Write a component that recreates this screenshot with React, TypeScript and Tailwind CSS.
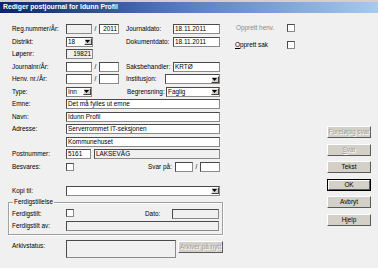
import React from "react";

const sunken =
  "border border-t-[#4a4a4a] border-l-[#4a4a4a] border-b-[#8a8a8a] border-r-[#8a8a8a]";

function Label({ className = "", children }: { className?: string; children?: React.ReactNode }) {
  return <div className={`shrink-0 whitespace-nowrap leading-[8px] ${className}`}>{children}</div>;
}

function Box({
  className = "",
  gray,
  right,
  children,
}: {
  className?: string;
  gray?: boolean;
  right?: boolean;
  children?: React.ReactNode;
}) {
  return (
    <div
      className={`h-[10px] shrink-0 flex items-center overflow-hidden whitespace-nowrap px-[1px] leading-[8px] ${sunken} ${
        gray ? "bg-[#f0f0f0]" : "bg-white"
      } ${right ? "justify-end" : ""} ${className}`}
    >
      {children}
    </div>
  );
}

function Select({ className = "", children }: { className?: string; children?: React.ReactNode }) {
  return (
    <div
      className={`h-[10px] shrink-0 flex items-center bg-white pl-[1px] pr-[0.5px] leading-[8px] ${sunken} ${className}`}
    >
      <span className="flex-1 overflow-hidden whitespace-nowrap">{children}</span>
      <span className="w-[8px] h-[7px] flex items-center justify-center bg-[#d4d0c8] border border-t-white border-l-white border-b-[#404040] border-r-[#404040]">
        <svg width="5" height="3" viewBox="0 0 5 3">
          <path d="M0 0h5L2.5 3z" fill="#000" />
        </svg>
      </span>
    </div>
  );
}

function Check({ className = "" }: { className?: string }) {
  return <div className={`w-[8px] h-[8px] shrink-0 bg-white ${sunken} ${className}`} />;
}

function Slash() {
  return <div className="w-[7px] shrink-0 text-center leading-[8px]">/</div>;
}

function Btn({
  children,
  disabled,
  primary,
  className = "",
}: {
  children?: React.ReactNode;
  disabled?: boolean;
  primary?: boolean;
  className?: string;
}) {
  const inner = (
    <div
      className={`h-full w-full flex items-center justify-center bg-[#d4d0c8] border border-t-white border-l-white border-b-[#5a5a5a] border-r-[#5a5a5a] whitespace-nowrap leading-[8px] ${
        disabled ? "text-[#a0a0a0] [text-shadow:1px_1px_0_#fff]" : "text-black"
      }`}
    >
      {children}
    </div>
  );
  return (
    <div className={`h-[12px] w-[44px] shrink-0 ${primary ? "border border-black" : ""} ${className}`}>
      {inner}
    </div>
  );
}

function Row({ children, className = "" }: { children?: React.ReactNode; className?: string }) {
  return <div className={`flex items-center h-[12.5px] ${className}`}>{children}</div>;
}

export default function App() {
  return (
    <div className="w-[378px] h-[268px] overflow-hidden bg-[#f0f0f0] text-black text-[6.4px] font-['Liberation_Sans',Arial,sans-serif]">
      <div className="h-[2px] bg-[#d4d0c8]" />
      <div className="h-[11px] flex items-center pl-[3px] bg-linear-to-r from-[#0a246a] via-[#5a7fc0] to-[#a6caf0] text-white font-bold text-[6.8px]">
        Rediger postjournal for Idunn Profil
      </div>

      <div className="flex">
        {/* venstre skjema */}
        <div className="w-[225px] shrink-0 pt-[10px]">
          <Row>
            <Label className="w-[66px] pl-[12px]">Reg.nummer/År:</Label>
            <Box gray className="w-[26px]" />
            <Slash />
            <Box right className="w-[20px]">2011</Box>
            <Label className="ml-[7px] w-[47px]">Journaldato:</Label>
            <Box className="w-[47px]">18.11.2011</Box>
          </Row>
          <Row>
            <Label className="w-[66px] pl-[12px]">Distrikt:</Label>
            <Select className="w-[27px]">18</Select>
            <Label className="ml-[33px] w-[47px]">Dokumentdato:</Label>
            <Box className="w-[47px]">18.11.2011</Box>
          </Row>
          <Row>
            <Label className="w-[66px] pl-[12px]">Løpenr:</Label>
            <Box gray right className="w-[27px]">19821</Box>
          </Row>
          <Row>
            <Label className="w-[66px] pl-[12px]">Journalnr/År:</Label>
            <Box className="w-[26px]" />
            <Slash />
            <Box className="w-[20px]" />
            <Label className="ml-[7px] w-[47px]">Saksbehandler:</Label>
            <Box className="w-[47px]">KRTØ</Box>
          </Row>
          <Row>
            <Label className="w-[66px] pl-[12px]">Henv. nr./År:</Label>
            <Box className="w-[26px]" />
            <Slash />
            <Box className="w-[20px]" />
            <Label className="ml-[7px] w-[39px]">Institusjon:</Label>
            <Select className="w-[55px]" />
          </Row>
          <Row>
            <Label className="w-[66px] pl-[12px]">Type:</Label>
            <Select className="w-[26px]">Inn</Select>
            <Label className="ml-[35px] w-[39px]">Begrensning:</Label>
            <Select className="w-[54px]">Faglig</Select>
          </Row>
          <Row>
            <Label className="w-[66px] pl-[12px]">Emne:</Label>
            <Box className="w-[154px]">Det må fylles ut emne</Box>
          </Row>
          <Row>
            <Label className="w-[66px] pl-[12px]">Navn:</Label>
            <Box className="w-[154px]">Idunn Profil</Box>
          </Row>
          <Row>
            <Label className="w-[66px] pl-[12px]">Adresse:</Label>
            <Box className="w-[154px]">Serverrommet IT-seksjonen</Box>
          </Row>
          <Row>
            <Label className="w-[66px] pl-[12px]" />
            <Box className="w-[154px]">Kommunehuset</Box>
          </Row>
          <Row>
            <Label className="w-[66px] pl-[12px]">Postnummer:</Label>
            <Box className="w-[25px]">5161</Box>
            <Box gray className="ml-[3px] w-[126px]">LAKSEVÅG</Box>
          </Row>
          <Row>
            <Label className="w-[66px] pl-[12px]">Besvares:</Label>
            <Check />
            <Label className="ml-[74px] w-[27px]">Svar på:</Label>
            <Box className="w-[18px]" />
            <Slash />
            <Box className="w-[20px]" />
          </Row>

          <Row className="mt-[11.5px]">
            <Label className="w-[66px] pl-[12px]">Kopi til:</Label>
            <Select className="w-[154px]" />
          </Row>

          <div className="relative ml-[8px] mt-[4.5px] w-[215px] h-[33px] border border-[#a0a0a0] shadow-[inset_1px_1px_0_#fff,1px_1px_0_#fff] pt-[5px]">
            <div className="absolute -top-[4.5px] left-[4px] px-[1px] bg-[#f0f0f0] leading-[8px]">Ferdigstillelse</div>
            <Row>
              <Label className="w-[57px] pl-[3px]">Ferdigstilt:</Label>
              <Check className="-mt-[2px]" />
              <Label className="ml-[71px] w-[27px]">Dato:</Label>
              <Box gray className="w-[47px]" />
            </Row>
            <Row>
              <Label className="w-[57px] pl-[3px]">Ferdigstilt av:</Label>
              <Box gray className="w-[153px]" />
            </Row>
          </div>

          <div className="flex items-start mt-[5px]">
            <Label className="w-[66px] pl-[12px] pt-[2px]">Arkivstatus:</Label>
            <Box gray className="w-[110px] !h-[18px]" />
            <Btn disabled className="ml-[2px] mt-[1px] !w-[45px]">
              Arkiver på nytt
            </Btn>
          </div>
        </div>

        {/* høyre side */}
        <div className="flex-1 flex flex-col pt-[8.5px]">
          <div className="flex items-center h-[12px] pl-[11px]">
            <Label className="w-[51px] text-[#8a8a8a]">Opprett henv.</Label>
            <Check />
          </div>
          <div className="flex items-center h-[12px] pl-[10px] mt-[5px]">
            <Label className="w-[52px]">
              <span className="underline">O</span>pprett sak
            </Label>
            <Check />
          </div>

          <div className="flex flex-col items-end pr-[7px] mt-[75.5px] gap-[5.6px]">
            <Btn disabled>Foreløpig svar</Btn>
            <Btn disabled>
              <span className="underline">S</span>var
            </Btn>
            <Btn>Tekst</Btn>
            <Btn primary>OK</Btn>
            <Btn>Avbryt</Btn>
            <Btn>Hjelp</Btn>
          </div>
        </div>
      </div>
    </div>
  );
}
